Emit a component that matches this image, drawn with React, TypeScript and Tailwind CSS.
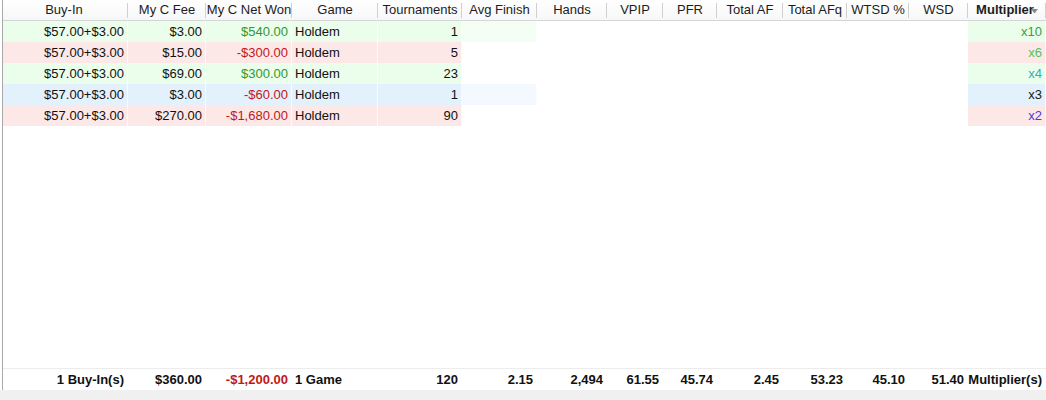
const cols = [
  { name: "Buy-In", w: 128 },
  { name: "My C Fee", w: 78 },
  { name: "My C Net Won", w: 86 },
  { name: "Game", w: 86 },
  { name: "Tournaments", w: 84 },
  { name: "Avg Finish", w: 75 },
  { name: "Hands", w: 70 },
  { name: "VPIP", w: 56 },
  { name: "PFR", w: 54 },
  { name: "Total AF", w: 66 },
  { name: "Total AFq", w: 64 },
  { name: "WTSD %", w: 62 },
  { name: "WSD", w: 59 },
  { name: "Multiplier", w: 78 },
];

const gridCols =
  "grid grid-cols-[128px_78px_86px_86px_84px_75px_70px_56px_54px_66px_64px_62px_59px_78px]";

interface Row {
  bg: string;
  fee: string;
  net: string;
  netPos: boolean;
  tourneys: string;
  mult: string;
  multColor: string;
}

const rows: Row[] = [
  { bg: "bg-[#ebfdeb]", fee: "$3.00", net: "$540.00", netPos: true, tourneys: "1", mult: "x10", multColor: "text-[#3a9e3a]" },
  { bg: "bg-[#fde8e8]", fee: "$15.00", net: "-$300.00", netPos: false, tourneys: "5", mult: "x6", multColor: "text-[#55c255]" },
  { bg: "bg-[#ebfdeb]", fee: "$69.00", net: "$300.00", netPos: true, tourneys: "23", mult: "x4", multColor: "text-[#2bb3b3]" },
  { bg: "bg-[#e2f1fc]", fee: "$3.00", net: "-$60.00", netPos: false, tourneys: "1", mult: "x3", multColor: "text-[#1a1a1a]" },
  { bg: "bg-[#fde8e8]", fee: "$270.00", net: "-$1,680.00", netPos: false, tourneys: "90", mult: "x2", multColor: "text-[#4b3ad6]" },
];

const totals = ["1 Buy-In(s)", "$360.00", "-$1,200.00", "1 Game", "120", "2.15", "2,494", "61.55", "45.74", "2.45", "53.23", "45.10", "51.40", "Multiplier(s)"];

function Cell({ children, className = "" }: { children?: React.ReactNode; className?: string }) {
  return (
    <div className={`h-[21px] flex items-center overflow-hidden whitespace-nowrap border-r border-white/70 px-[3px] ${className}`}>
      {children}
    </div>
  );
}

export default function App() {
  return (
    <div
      className="w-[1046px] h-[400px] flex flex-col bg-white text-[13px] text-[#111]"
      style={{ fontFamily: '"Liberation Sans", Arial, sans-serif' }}
    >
      <div className="flex-1 flex flex-col border-l border-[#a9a9a9] ml-[2px] -mr-[2px] overflow-hidden">
        {/* Header */}
        <div className={`${gridCols} h-[21px] shrink-0 bg-gradient-to-b from-white to-[#f6f7f8] border-b border-[#d5d5d5] -ml-[3px]`}>
          {cols.map((c, i) => (
            <div key={c.name} className="relative flex items-center justify-center whitespace-nowrap text-[#1c1c1c]">
              {i === cols.length - 1 ? (
                <span className="font-bold flex items-center">
                  Multiplier
                  <svg width="7" height="5" viewBox="0 0 7 5" className="-ml-[3px] mt-[3px]">
                    <path d="M0 0 L7 0 L3.5 4.5 Z" fill="#8a8a8a" />
                  </svg>
                </span>
              ) : (
                <span>{c.name}</span>
              )}
              <div className="absolute right-0 top-[3px] h-[15px] w-px bg-[#d0d0d0]" />
            </div>
          ))}
        </div>

        {/* Rows */}
        <div className="flex-1 -ml-[3px]">
          {rows.map((r, i) => (
            <div key={i} className={`${gridCols}`}>
              <Cell className={`${r.bg} justify-end`}>$57.00+$3.00</Cell>
              <Cell className={`${r.bg} justify-end`}>{r.fee}</Cell>
              <Cell className={`${r.bg} justify-end ${r.netPos ? "text-[#2e9a2e]" : "text-[#c01818]"}`}>{r.net}</Cell>
              <Cell className={`${r.bg}`}>Holdem</Cell>
              <Cell className={`${r.bg} justify-end`}>{r.tourneys}</Cell>
              <Cell className={i === 0 ? "bg-[#f4fef4]" : i === 3 ? "bg-[#f3f9fe]" : "bg-white"} />
              <Cell className="bg-white" />
              <Cell className="bg-white" />
              <Cell className="bg-white" />
              <Cell className="bg-white" />
              <Cell className="bg-white" />
              <Cell className="bg-white" />
              <Cell className="bg-white" />
              <Cell className={`${r.bg} justify-end ${r.multColor}`}>{r.mult}</Cell>
            </div>
          ))}
        </div>

        {/* Totals */}
        <div className={`${gridCols} border-t border-[#ececec] font-bold -ml-[3px]`}>
          {totals.map((t, i) => (
            <Cell key={i} className={`border-[#eeeeee] ${i === 3 ? "" : "justify-end"} ${i === 2 ? "text-[#c01818]" : ""}`}>
              {t}
            </Cell>
          ))}
        </div>
      </div>
      <div className="h-[10px] shrink-0 bg-[#f0f0f0]" />
    </div>
  );
}
